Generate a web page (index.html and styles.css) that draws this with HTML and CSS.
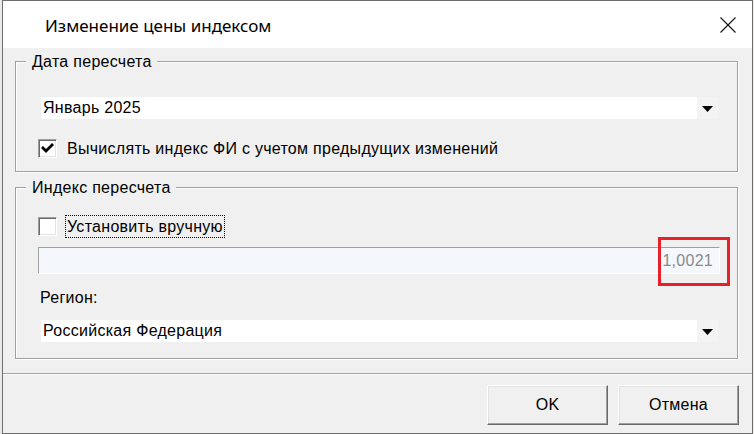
FILE: index.html
```html
<!DOCTYPE html>
<html lang="ru">
<head>
<meta charset="utf-8">
<title>Изменение цены индексом</title>
<link rel="stylesheet" href="styles.css">
</head>
<body>
<div class="window">
  <div class="titlebar">
    <span class="title">Изменение цены индексом</span>
    <svg class="close" width="16" height="16" viewBox="0 0 16 16"><path d="M0.5 0.5L15.5 15.5M15.5 0.5L0.5 15.5" stroke="#111" stroke-width="1.1" fill="none"/></svg>
  </div>
  <div class="client">
    <div class="groups">
      <fieldset class="group g1">
        <legend>Дата пересчета</legend>
        <div class="combo">
          <span class="combo-text">Январь 2025</span>
          <span class="combo-btn"><svg width="11" height="6" viewBox="0 0 11 6"><path d="M0 0H11L5.5 6Z" fill="#000"/></svg></span>
        </div>
        <div class="check-row r1">
          <span class="cb"><svg width="17" height="17" viewBox="0 0 17 17"><path d="M4 8L7 11L13 5" stroke="#000" stroke-width="2.8" fill="none" stroke-linecap="square"/></svg></span>
          <span class="cb-label">Вычислять индекс ФИ с учетом предыдущих изменений</span>
        </div>
      </fieldset>
      <fieldset class="group g2">
        <legend>Индекс пересчета</legend>
        <div class="check-row r2">
          <span class="cb"></span>
          <span class="cb-label focus">Установить вручную</span>
        </div>
        <div class="field">
          <span class="field-value">1,0021</span>
          <span class="mark"></span>
        </div>
        <div class="region-label">Регион:</div>
        <div class="combo c2">
          <span class="combo-text">Российская Федерация</span>
          <span class="combo-btn"><svg width="11" height="6" viewBox="0 0 11 6"><path d="M0 0H11L5.5 6Z" fill="#000"/></svg></span>
        </div>
      </fieldset>
    </div>
    <div class="footer">
      <button class="btn">OK</button>
      <button class="btn">Отмена</button>
    </div>
  </div>
</div>
</body>
</html>
```
FILE: styles.css
```css
html, body {
  margin: 0;
  padding: 0;
}
body {
  width: 754px;
  height: 434px;
  overflow: hidden;
  background: #ece9e9;
  font-family: "Liberation Sans", Arial, sans-serif;
  font-size: 16px;
  letter-spacing: 0.28px;
  color: #000;
}
.window {
  margin-left: 2px;
  width: 751px;
  height: 434px;
  box-sizing: border-box;
  border: 1px solid #6e6e6e;
  display: flex;
  flex-direction: column;
  background: #f0f0f0;
}
.titlebar {
  height: 47px;
  flex: none;
  background: #fff;
  display: flex;
  align-items: center;
  justify-content: space-between;
  padding: 1px 16px 0 42px;
  box-sizing: border-box;
}
.title {
  font-family: "Noto Sans", "Open Sans", sans-serif;
  font-size: 17px;
  letter-spacing: 0;
  color: #000;
}
.close {
  display: block;
}
.client {
  flex: 1;
  display: flex;
  flex-direction: column;
  background: #f0f0f0;
}
.groups {
  padding: 4px 14px 0 12px;
}
.group {
  margin: 0;
  padding: 26px 17px 13px 22px;
  border: 1px solid #a0a0a0;
  box-shadow: inset 1px 1px 0 #fff, 1px 1px 0 #fff;
  min-width: 0;
}
.group legend {
  line-height: 19px;
  margin-left: -12px;
  padding: 0 5px 0 6px;
  background: #f0f0f0;
}
.g2 {
  margin-top: 6px;
  padding-top: 18px;
  padding-bottom: 16px;
}
.combo {
  height: 22px;
  margin: 0 2px 0 3px;
  background: #fff;
  display: flex;
  align-items: center;
}
.combo-text {
  flex: 1;
  padding-left: 2px;
  line-height: 22px;
}
.combo-btn {
  width: 21px;
  height: 22px;
  background: #f3f3f3;
  display: flex;
  align-items: center;
  justify-content: center;
  padding-top: 2px;
  box-sizing: border-box;
}
.combo-btn svg {
  display: block;
}
.check-row {
  display: flex;
  align-items: center;
}
.r1 {
  margin-top: 20px;
  height: 19px;
}
.r2 {
  height: 23px;
}
.cb {
  width: 19px;
  height: 19px;
  box-sizing: border-box;
  background: #fff;
  border: 1px solid;
  border-color: #a0a0a0 #fff #fff #a0a0a0;
  box-shadow: inset 1px 1px 0 #696969, inset -1px -1px 0 #e3e3e3;
  display: flex;
  align-items: center;
  justify-content: center;
  flex: none;
}
.cb svg {
  display: block;
}
.cb-label {
  margin-left: 10px;
  line-height: 19px;
}
.cb-label.focus {
  margin-left: 8px;
  padding: 0 1px;
  border: 1px dotted #000;
  line-height: 21px;
}
.field {
  position: relative;
  margin-top: 9px;
  height: 27px;
  box-sizing: border-box;
  background: #f4f7fc;
  border-top: 1px solid #a0a0a0;
  border-left: 1px solid #a0a0a0;
  border-bottom: 1px solid #fff;
  border-right: 1px solid #fff;
  display: flex;
  align-items: center;
  justify-content: flex-end;
  padding-right: 6px;
}
.field-value {
  color: #8a8a8a;
}
.mark {
  position: absolute;
  right: -11px;
  top: -11px;
  width: 72px;
  height: 49px;
  box-sizing: border-box;
  border: 3px solid #e8202a;
}
.region-label {
  margin: 15px 0 0 2px;
  line-height: 18px;
}
.c2 {
  margin-top: 13px;
}
.footer {
  margin-top: auto;
  border-top: 1px solid #a0a0a0;
  box-shadow: inset 0 1px 0 #fff;
  padding: 11px 13px 8px 0;
  display: flex;
  justify-content: flex-end;
  gap: 10px;
}
.btn {
  width: 121px;
  height: 40px;
  box-sizing: border-box;
  margin: 0;
  padding: 0;
  font-family: "Liberation Sans", Arial, sans-serif;
  font-size: 16px;
  letter-spacing: 0.28px;
  color: #000;
  background: #f0f0f0;
  border: 1px solid;
  border-color: #fff #696969 #696969 #fff;
  box-shadow: inset -1px -1px 0 #a0a0a0, inset 1px 1px 0 #e3e3e3;
}
```
